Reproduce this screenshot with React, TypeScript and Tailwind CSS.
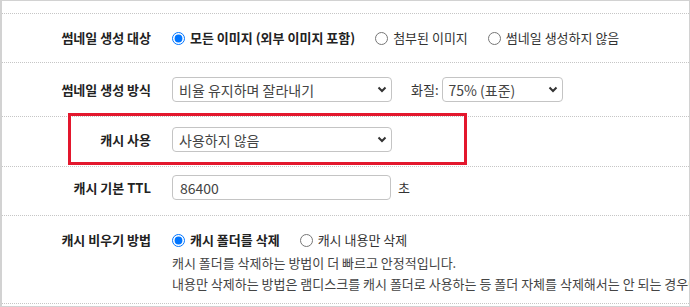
import React from "react";

const font = "font-['Noto_Sans_CJK_KR','Liberation_Sans',sans-serif]";

function Chevron() {
  return (
    <svg width="10" height="7" viewBox="0 0 10 7" className="shrink-0">
      <path d="M1.5 1.5 5 5l3.5-3.5" fill="none" stroke="#333" strokeWidth="2" />
    </svg>
  );
}

function FakeSelect({ value, width }: { value: string; width: string }) {
  return (
    <div
      className={`${width} flex h-[25px] items-center justify-between rounded-[4px] border border-[#c4c4c4] bg-white pl-[6px] pr-[4px] text-[14px] text-[#444]`}
    >
      <span className="leading-none">{value}</span>
      <Chevron />
    </div>
  );
}

function Radio({ label, checked, name }: { label: string; checked?: boolean; name: string }) {
  return (
    <label className="mr-[20px] flex items-center">
      <input
        type="radio"
        name={name}
        defaultChecked={checked}
        className="m-0 size-[13px] accent-[#0075ff]"
      />
      <span className={`ml-[5px] text-[13px] ${checked ? "font-bold text-[#222]" : "text-[#333]"}`}>
        {label}
      </span>
    </label>
  );
}

function Label({ children }: { children: React.ReactNode }) {
  return (
    <div className="w-[149px] shrink-0 text-right text-[13px] font-bold text-[#222]">{children}</div>
  );
}

export default function App() {
  return (
    <div className={`h-[307px] w-[690px] overflow-hidden bg-white ${font}`}>
      <div className="flex h-full flex-col border border-l-2 border-[#d2d2d2]">
        <div className="h-[13px] shrink-0 border-b border-dotted border-[#c6c6c6]" />

        {/* 썸네일 생성 대상 */}
        <div className="flex h-[49px] shrink-0 items-center border-b border-dotted border-[#c6c6c6]">
          <Label>썸네일 생성 대상</Label>
          <div className="ml-[21px] flex items-center">
            <Radio name="target" label="모든 이미지 (외부 이미지 포함)" checked />
            <Radio name="target" label="첨부된 이미지" />
            <Radio name="target" label="썸네일 생성하지 않음" />
          </div>
        </div>

        {/* 썸네일 생성 방식 */}
        <div className="flex h-[54px] shrink-0 items-center border-b border-dotted border-[#c6c6c6]">
          <Label>썸네일 생성 방식</Label>
          <div className="ml-[21px] flex items-center">
            <FakeSelect value="비율 유지하며 잘라내기" width="w-[220px]" />
            <span className="ml-[19px] mr-[3px] text-[13px] text-[#333]">화질:</span>
            <FakeSelect value="75% (표준)" width="w-[121px]" />
          </div>
        </div>

        {/* 캐시 사용 */}
        <div className="relative flex h-[50px] shrink-0 items-start border-b border-dotted border-[#c6c6c6] pt-[10px]">
          <div className="flex h-[25px] items-center">
            <Label>캐시 사용</Label>
          </div>
          <div className="ml-[21px]">
            <FakeSelect value="사용하지 않음" width="w-[220px]" />
          </div>
          <div className="pointer-events-none absolute left-[66px] top-[-4px] h-[52px] w-[399px] border-[3px] border-[#e3172d]" />
        </div>

        {/* 캐시 기본 TTL */}
        <div className="flex h-[49px] shrink-0 items-start border-b border-dotted border-[#c6c6c6] pt-[8px]">
          <div className="flex h-[25px] items-center">
            <Label>캐시 기본 TTL</Label>
          </div>
          <div className="ml-[21px] flex items-center">
            <input
              readOnly
              defaultValue="86400"
              className="h-[25px] w-[219px] rounded-[4px] border border-[#c4c4c4] px-[7px] text-[14px] text-[#444] outline-none"
            />
            <span className="ml-[7px] text-[13px] text-[#333]">초</span>
          </div>
        </div>

        {/* 캐시 비우기 방법 */}
        <div className="flex h-[88px] shrink-0 items-start border-b border-dotted border-[#c6c6c6] pt-[14px]">
          <div className="flex h-[20px] items-center">
            <Label>캐시 비우기 방법</Label>
          </div>
          <div className="ml-[21px] min-w-0 flex-1">
            <div className="flex h-[20px] items-center">
              <Radio name="clear" label="캐시 폴더를 삭제" checked />
              <Radio name="clear" label="캐시 내용만 삭제" />
            </div>
            <div className="mt-[2px] overflow-hidden whitespace-nowrap text-[13px] leading-[21px] text-[#444]">
              <p>캐시 폴더를 삭제하는 방법이 더 빠르고 안정적입니다.</p>
              <p>내용만 삭제하는 방법은 램디스크를 캐시 폴더로 사용하는 등 폴더 자체를 삭제해서는 안 되는 경우에 사용하십시오.</p>
            </div>
          </div>
        </div>
      </div>
    </div>
  );
}
